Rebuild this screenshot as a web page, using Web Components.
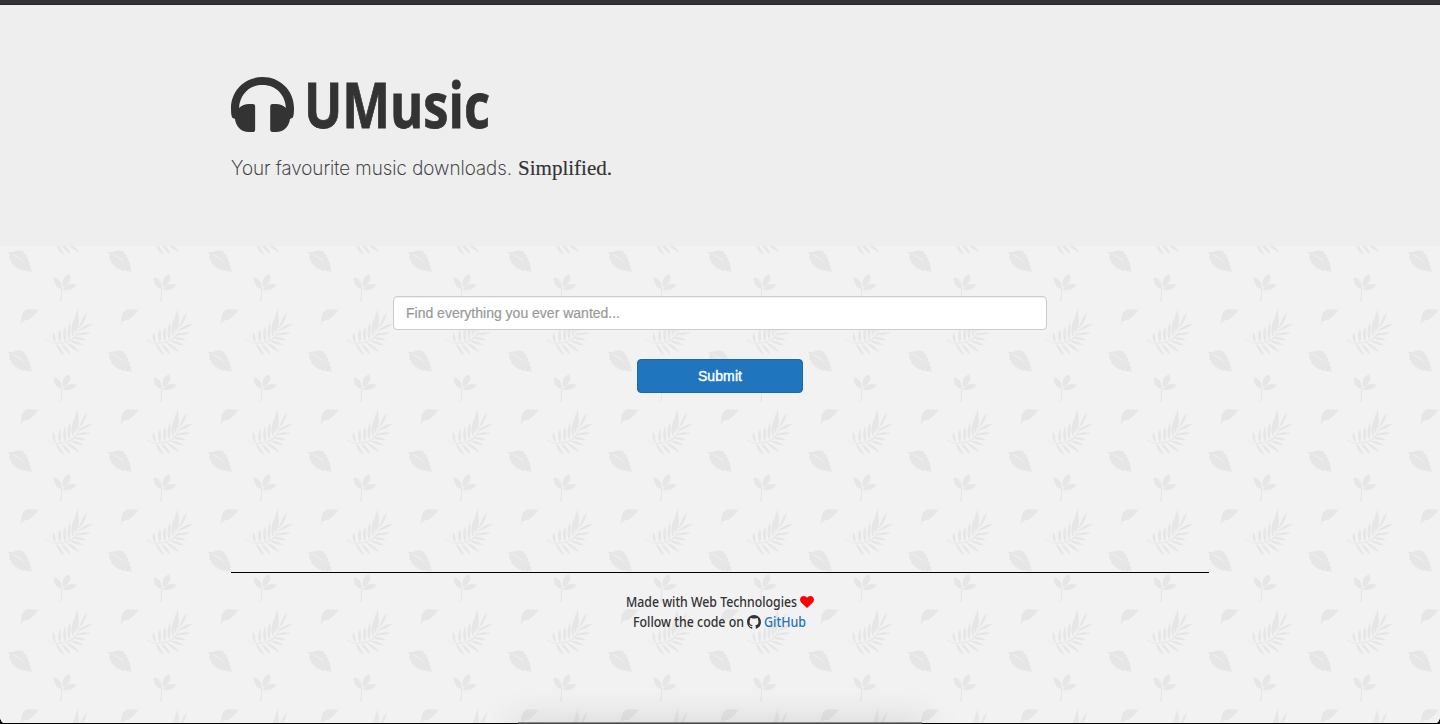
<!DOCTYPE html>
<html lang="en"><head><meta charset="utf-8"><title>UMusic</title>
<style>html,body{margin:0;height:100%;overflow:hidden}</style></head><body>
<music-app></music-app>
<script>
const define=(name,html)=>customElements.define(name,class extends HTMLElement{
  constructor(){super();this.attachShadow({mode:'open'}).innerHTML=html}
});

// Text set to a given width in pixels, so the line keeps its measure in any font
customElements.define('fit-text',class extends HTMLElement{
  connectedCallback(){
    if(this.shadowRoot)return;
    this.attachShadow({mode:'open'}).innerHTML='<style>:host{display:inline-block;white-space:nowrap}span{display:inline-block;transform-origin:0 50%}</style><span><slot></slot></span>';
    const s=this.shadowRoot.querySelector('span'),w=+this.getAttribute('width');
    const n=s.getBoundingClientRect().width;
    this.style.width=w+'px';
    if(n)s.style.transform=`scaleX(${w/n})`;
  }
});

// Fern leaflets: base x, base y, tip x, tip y, sideways bow
const leaflets=[[55,42.5,53.500,32,-3.500],[60,43,60,29,-4],[65,42,65,26,-4],[69,40.500,70,22,-4],[73,37.500,74,19,-4],[76,34,76,13,-4],[78,30,77.500,8,-3.500],[79,28,87,12,3.500],
[56,43,64,55.500,3.500],[61,43.500,70.500,54.500,-3.500],[66,42.500,79.500,52.500,-3.500],[70,41,84,45.500,-3.500],[73,38,86,40,-3.500],[75,35,91,33,-3.500],[78,31,93.500,23.500,-3.500]];
const fern=leaflets.map(([a,b,c,d,k])=>{
  const dx=c-a,dy=d-b,l=Math.hypot(dx,dy),nx=-dy/l,ny=dx/l,mx=a+dx*.45,my=b+dy*.45;
  const s=Math.sign(k)*Math.sign(k);
  return `M${a} ${b}Q${(mx+nx*k*s).toFixed(2)} ${(my+ny*k*s).toFixed(2)} ${c} ${d}Q${(mx-nx*k*.6).toFixed(2)} ${(my-ny*k*.6).toFixed(2)} ${a} ${b}Z`;
}).join('');

define('leaf-pattern',`<style>:host{position:absolute;inset:0;z-index:-1;background:#f2f2f2}svg{display:block;width:100%;height:100%}</style>
<svg><defs><pattern id="p" x="0" y="5" width="100" height="100" patternUnits="userSpaceOnUse"><g transform="translate(0 -5)" fill="#e6e6e6">
<path d="M20.500 25L21.300 21.500C20.500 16 23 10.500 28 9L30 9.500 33 9.200 35 9.800 39 9.500 36.500 12 37 12.500 34.500 14 35 15 32 16.500 32.500 17.500 29.500 18.500 29 20 26.500 20 22.500 21.500 21 25Z"/>
<path d="M7 51.500C10 52 12 52.500 14 51.500C18 50 22 50.500 24 52L24.500 54 26.500 55 26.500 57 28.300 58.500 28 60.500 30 62.500 29.500 64.500 31 67 30.700 69 32 72 29 71 27 71.500 25.500 70 22 71 20.500 69 18 69.500 17 67.500 14.500 67 14 65 11.500 64 11.500 62C9 59 8.500 56 10 54.500Z"/>
<path d="M11 54Q20 56 25 63Q19 57.500 11 54" fill="#f2f2f2"/>
<path d="M46 39.300Q49 40.200 52 42.200Q65 44.500 74 37Q78 33 80 27Q79 34 75 38Q67 45 53 43.300Q49 41.500 46 40Z"/>
<path d="${fern}"/>
<path d="M61.500 89C56 88 53 82 54 77C59.500 79 63 83 61.500 89ZM63 87.500Q60.500 77 69.500 74Q73 82 63 87.500ZM63 89.800Q66 82.500 76.500 84.500Q73 91.500 63 89.800ZM61 88H62.300L62 94 61.700 101.500H60.300Q61.500 94 61 88Z"/>
</g></pattern></defs><rect width="100%" height="100%" fill="url(#p)"/></svg>`);

define('window-bar',`<style>:host{display:block;height:5px;background:linear-gradient(#36343b 0 4px,#26262a 4px)}</style>`);

define('headphones-icon',`<style>:host{display:block;width:63px;height:55px}svg{display:block}</style>
<svg width="63" height="55" viewBox="0 0 188 165" preserveAspectRatio="none" fill="#333"><path d="M0 94C0 40 42 0 94 0S188 40 188 94C188 108 187 118 184 122L176 126C174 146 160 165 134 165H124Q117 165 117 158V88Q117 81 124 81H134Q152 81 164 93C162 55 136 24 94 24S26 55 24 93Q36 81 54 81H64Q72 81 72 88V158Q72 165 64 165H54C28 165 14 146 12 126L4 122C1 118 0 108 0 94Z"/></svg>`);

define('hero-banner',`<style>
:host{display:block;box-sizing:border-box;height:241px;padding:72px 231px 0;background:#eee;color:#333}
.brand{display:flex;height:56px;gap:10px}
h1{margin:0;font:750 62px/54px "Open Sans",sans-serif;-webkit-text-stroke:.8px #333}
p{margin:23px 0 0;display:flex;gap:6px;height:24px;font:200 20px/24px Inter,sans-serif;align-items:baseline;-webkit-text-stroke:.15px #333}
.s{font:21px/24px "Liberation Serif",serif}
</style><div class="brand"><headphones-icon></headphones-icon><h1><fit-text width="186">UMusic</fit-text></h1></div>
<p><fit-text width="281">Your favourite music downloads.</fit-text><fit-text class="s" width="94">Simplified.</fit-text></p>`);

define('search-form',`<style>
:host{display:flex;flex-direction:column;align-items:center;gap:29px;padding-top:50px}
input{box-sizing:border-box;width:654px;height:34px;border:1px solid #ccc;border-radius:4px;background:#fff;padding:6px 12px;font:14px/20px "Liberation Sans",sans-serif;box-shadow:inset 0 1px 1px #00000013;margin:0}
input::placeholder{color:#999;-webkit-text-stroke:.2px #999;opacity:1}
button{box-sizing:border-box;width:166px;height:34px;border:1px solid #1b69a8;border-radius:4px;background:#1f75be;color:#fff;font:14px/20px "Liberation Sans",sans-serif;letter-spacing:.1px;-webkit-text-stroke:.4px #fff;padding:0}
</style><input placeholder="Find everything you ever wanted..."><button>Submit</button>`);

define('site-footer',`<style>
:host{display:block;margin:179px 231px 0;border-top:1px solid #000;padding-top:19px;font:500 14px/20px "Noto Sans","Open Sans",sans-serif;color:#333}
div{display:flex;height:20px;justify-content:center;align-items:center;gap:3px}
.code{margin-right:1px}
a{color:#1f75be;text-decoration:none}svg{display:block}
</style><div><fit-text width="171">Made with Web Technologies</fit-text><svg width="14" height="12" viewBox="0 0 14 12"><path fill="red" d="M7 12L1.200 6.600C-1 4.300 0 0 3.700 0C5.200 0 6.300 1 7 1.800C7.700 1 8.800 0 10.300 0C14 0 15 4.300 12.800 6.600Z"/></svg></div>
<div class="code"><fit-text width="111">Follow the code on</fit-text><svg width="14" height="14" viewBox="0 0 16 16"><path fill="#333" d="M8 0C3.580 0 0 3.580 0 8c0 3.540 2.290 6.530 5.470 7.590.4.070.55-.17.55-.38 0-.19-.01-.82-.01-1.490-2.010.37-2.530-.49-2.690-.94-.09-.23-.48-.94-.82-1.130-.28-.15-.68-.52-.01-.53.63-.01 1.080.58 1.230.82.72 1.210 1.870.87 2.330.66.07-.52.28-.87.51-1.070-1.780-.2-3.640-.89-3.640-3.950 0-.87.31-1.590.82-2.150-.08-.2-.36-1.020.08-2.120 0 0 .67-.21 2.200.82.64-.18 1.320-.27 2-.27s1.360.09 2 .27c1.530-1.040 2.200-.82 2.200-.82.44 1.100.16 1.920.08 2.120.51.56.82 1.270.82 2.150 0 3.070-1.870 3.750-3.650 3.950.29.25.54.73.54 1.480 0 1.070-.01 1.930-.01 2.200 0 .21.15.46.55.38A8.010 8.010 0 0 0 16 8c0-4.420-3.580-8-8-8Z"/></svg><a><fit-text width="42">GitHub</fit-text></a></div>`);

define('window-edge',`<style>
:host{position:absolute;inset:auto 0 0;height:60px;overflow:hidden;pointer-events:none}
i{position:absolute}
.sh{left:516px;width:407px;top:63px;height:30px;box-shadow:0 0 42px 3px #00000024}
.l{left:0;right:0;bottom:0;height:1px;background:#000}
.d{left:518px;width:404px;bottom:0;height:2px;background:linear-gradient(#8a8888 50%,#484848 50%)}
.c{width:6px;height:6px;bottom:0}
.a{left:0;background:radial-gradient(circle at 6px 0,transparent 5.500px,#000 6px)}
.b{right:0;background:radial-gradient(circle at 0 0,transparent 5.500px,#000 6px)}
</style><i class="sh"></i><i class="l"></i><i class="d"></i><i class="c a"></i><i class="c b"></i>`);

define('music-app',`<style>:host{display:block;position:relative;isolation:isolate;height:724px;overflow:hidden}</style>
<leaf-pattern></leaf-pattern><window-bar></window-bar><hero-banner></hero-banner><search-form></search-form><site-footer></site-footer><window-edge></window-edge>`);
</script></body></html>
